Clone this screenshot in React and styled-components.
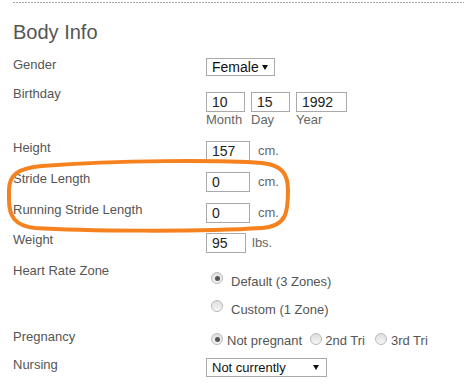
import React from "react";
import styled, { createGlobalStyle } from "styled-components";

const GlobalStyle = createGlobalStyle`
  html, body { margin: 0; padding: 0; background: #fff; }
  body { font-family: "Liberation Sans", Arial, sans-serif; }
  * { box-sizing: border-box; }
`;

const Page = styled.div`
  position: relative;
  width: 464px;
  height: 387px;
  padding-left: 13px;
  overflow: hidden;
  color: #555;
`;

const Divider = styled.div`
  margin-top: 2px;
  height: 1px;
  background: repeating-linear-gradient(to right, #a8a8a8 0 2px, transparent 2px 3px);
`;

const Title = styled.h2`
  margin: 17px 0 0;
  font-size: 20px;
  line-height: 24px;
  font-weight: normal;
  color: #555;
`;

const Row = styled.div`
  display: grid;
  grid-template-columns: 193px auto;
  align-items: start;
  margin-top: ${(p) => p.$mt}px;
`;

const Label = styled.div`
  font-size: 13px;
  line-height: 15px;
  color: #555;
`;

const Control = styled.div`
  display: flex;
  align-items: flex-start;
  padding-top: ${(p) => p.$pt || 0}px;
`;

const TextInput = styled.input`
  width: ${(p) => p.$w}px;
  height: 20px;
  margin: 0;
  padding: 0 5px;
  border: 1px solid #a9a9a9;
  border-radius: 0;
  font-family: "Liberation Sans", Arial, sans-serif;
  font-size: 14px;
  line-height: 18px;
  color: #222;
  background: #fff;
  outline: none;
`;

const Unit = styled.span`
  margin-left: ${(p) => p.$ml}px;
  font-size: 13px;
  line-height: 20px;
  color: #666;
`;

const DateGroup = styled.div`
  display: flex;
  gap: 6px;
`;

const DateField = styled.div`
  display: flex;
  flex-direction: column;
`;

const Caption = styled.span`
  font-size: 13px;
  line-height: 15px;
  color: #666;
`;

const SelectBox = styled.div`
  display: flex;
  align-items: center;
  justify-content: space-between;
  width: ${(p) => p.$w}px;
  height: ${(p) => p.$h}px;
  padding: 0 ${(p) => p.$pr}px 0 5px;
  border: 1px solid #a9a9a9;
  background: #fff;
  font-size: ${(p) => p.$fs}px;
  line-height: 16px;
  color: #111;
`;

const Arrow = () => (
  <svg width="6" height="5" viewBox="0 0 6 5" aria-hidden="true">
    <polygon points="0,0 6,0 3,5" fill="#111" />
  </svg>
);

const RadioList = styled.div`
  display: flex;
  flex-direction: column;
  gap: 13px;
`;

const RadioInline = styled.div`
  display: flex;
  align-items: flex-start;
`;

const Choice = styled.label`
  display: flex;
  align-items: flex-start;
  margin-left: ${(p) => p.$ml || 0}px;
  font-size: 13px;
  line-height: 15px;
  color: #555;
`;

const Radio = styled.span`
  position: relative;
  flex: none;
  width: 12px;
  height: 12px;
  margin: ${(p) => p.$mt}px ${(p) => p.$mr}px 0 5px;
  border-radius: 50%;
  border: 1px solid #b9b9b9;
  background: linear-gradient(#dedede, #f6f6f6);
  &::after {
    content: "";
    display: ${(p) => (p.$on ? "block" : "none")};
    position: absolute;
    left: 2.5px;
    top: 2.5px;
    width: 5px;
    height: 5px;
    border-radius: 50%;
    background: #555;
  }
`;

const Highlight = styled.svg`
  position: absolute;
  left: 0;
  top: 0;
  pointer-events: none;
`;

export default function App() {
  return (
    <>
      <GlobalStyle />
      <Page>
        <Divider />
        <Title>Body Info</Title>

        <Row $mt={13}>
          <Label>Gender</Label>
          <Control $pt={1}>
            <SelectBox $w={69} $h={18} $fs={14} $pr={6}>
              <span>Female</span>
              <Arrow />
            </SelectBox>
          </Control>
        </Row>

        <Row $mt={10}>
          <Label>Birthday</Label>
          <Control $pt={6}>
            <DateGroup>
              <DateField>
                <TextInput $w={39} defaultValue="10" />
                <Caption>Month</Caption>
              </DateField>
              <DateField>
                <TextInput $w={39} defaultValue="15" />
                <Caption>Day</Caption>
              </DateField>
              <DateField>
                <TextInput $w={51} defaultValue="1992" />
                <Caption>Year</Caption>
              </DateField>
            </DateGroup>
          </Control>
        </Row>

        <Row $mt={13}>
          <Label>Height</Label>
          <Control $pt={1}>
            <TextInput $w={44} defaultValue="157" />
            <Unit $ml={8}>cm.</Unit>
          </Control>
        </Row>

        <Row $mt={10}>
          <Label>Stride Length</Label>
          <Control $pt={1}>
            <TextInput $w={44} defaultValue="0" />
            <Unit $ml={8}>cm.</Unit>
          </Control>
        </Row>

        <Row $mt={10}>
          <Label>Running Stride Length</Label>
          <Control $pt={1}>
            <TextInput $w={44} defaultValue="0" />
            <Unit $ml={8}>cm.</Unit>
          </Control>
        </Row>

        <Row $mt={9}>
          <Label>Weight</Label>
          <Control $pt={1}>
            <TextInput $w={40} defaultValue="95" />
            <Unit $ml={6}>lbs.</Unit>
          </Control>
        </Row>

        <Row $mt={10}>
          <Label>Heart Rate Zone</Label>
          <Control $pt={11}>
            <RadioList>
              <Choice>
                <Radio $on $mt={-2} $mr={8} />
                Default (3 Zones)
              </Choice>
              <Choice>
                <Radio $mt={-2} $mr={8} />
                Custom (1 Zone)
              </Choice>
            </RadioList>
          </Control>
        </Row>

        <Row $mt={12}>
          <Label>Pregnancy</Label>
          <Control $pt={4}>
            <RadioInline>
              <Choice>
                <Radio $on $mt={0} $mr={4} />
                Not pregnant
              </Choice>
              <Choice $ml={3}>
                <Radio $mt={0} $mr={3} />
                2nd Tri
              </Choice>
              <Choice $ml={5}>
                <Radio $mt={0} $mr={4} />
                3rd Tri
              </Choice>
            </RadioInline>
          </Control>
        </Row>

        <Row $mt={9}>
          <Label>Nursing</Label>
          <Control $pt={1}>
            <SelectBox $w={121} $h={19} $fs={13} $pr={7}>
              <span>Not currently</span>
              <Arrow />
            </SelectBox>
          </Control>
        </Row>

        <Highlight width="464" height="387" viewBox="0 0 464 387" aria-hidden="true">
          <path
            d="M 9 190 C 9 175, 18 168, 42 166 C 120 160, 220 160, 262 163 C 280 165, 288 172, 288 190 C 288 212, 287 226, 262 228 C 200 232, 80 231, 35 228 C 14 226, 9 215, 9 200 Z"
            fill="none"
            stroke="#f6821f"
            strokeWidth="4"
          />
        </Highlight>
      </Page>
    </>
  );
}
